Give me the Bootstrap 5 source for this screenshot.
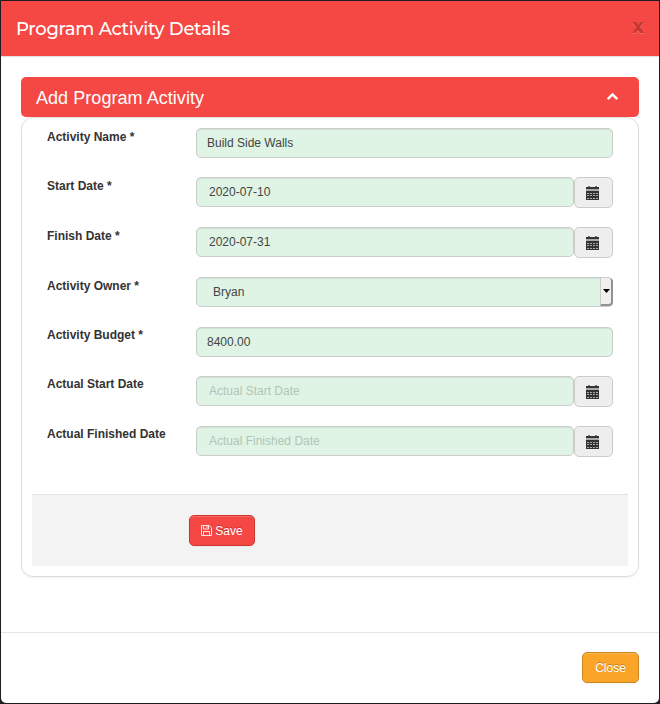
<!DOCTYPE html>
<html lang="en">
<head>
<meta charset="utf-8">
<meta name="viewport" content="width=device-width, initial-scale=1">
<title>Program Activity Details</title>
<link href="https://cdn.jsdelivr.net/npm/bootstrap@5.3.0/dist/css/bootstrap.min.css" rel="stylesheet">
<style>
body{background:#1e1c20;font:12px/20px "Liberation Sans",Arial,sans-serif;color:#333;padding:1px;height:704px;overflow:hidden}
.dialog{height:702px;border:0;border-radius:0 0 5px 5px;background:#fff}
.dialog-head{height:56px;background:#f54743;border-bottom:1px solid #e0e0e0;border-radius:0;padding:0 15px 0 15px}
.dialog-title{font:500 18px/20px Montserrat,Inter,sans-serif;color:#fff;letter-spacing:-.28px}
.dismiss{font:bold 20px/20px Montserrat,Inter,sans-serif;color:#000;opacity:.2;text-shadow:0 1px 0 #fff;margin-top:-6px}
.dialog-main{padding:20px 20px 0}
.panel-head{height:40px;border-radius:5px;background:#f54743;color:#fff;font-size:18px;line-height:20px;letter-spacing:.05px;padding:1px 20px 0 15px}
.panel-head svg{margin-top:-3px}
.panel-main{height:460px;border:1px solid #ddd;border-radius:12px;padding:10px 10px 0;box-shadow:0 1px 2px rgba(0,0,0,.06)}
.fields{display:grid;grid-template-rows:49px 50px 50px 50px 49px 50px 68px;padding:0 15px}
.field{display:grid;grid-template-columns:149px 417px}
.field label{font-weight:700;line-height:18px}
.field.up label{margin-top:-1px}
.field .form-control,.field .form-select{height:30px;min-height:0;font-size:12px;line-height:18px;padding:4px 10px;border:1px solid #ccc;border-radius:5px;background:#dff4e4;color:#444;box-shadow:inset 0 1px 1px rgba(0,0,0,.075)}
.field .input-group .form-control{padding-left:12px}
.field .form-control::placeholder{color:#b3c4b7;opacity:1}
.input-group .input-group-text{width:39px;height:31px;border:1px solid #ccc;border-radius:5px!important;background:#eee;padding:0 3px 0 0;margin-left:0!important}
.input-group .form-control{border-radius:5px!important}
.field .form-select{padding-left:16px}
.arrow-cap{position:absolute;right:0;top:1px;width:13px;height:28px;background:#f0f0ee;border-left:1px solid #ccc;border-right:2px solid #929292;border-bottom:2px solid #929292;border-radius:0 4px 4px 0;pointer-events:none}
.action-bar{height:72px;background:#f3f3f3;border-top:1px solid #e2e2e2;padding:20px 0 0 157px}
.btn.action{height:31px;padding:0;border-radius:5px;font-size:12px;line-height:18px;color:#fff;text-shadow:0 -1px 0 rgba(0,0,0,.25);box-shadow:inset 0 1px 0 rgba(255,255,255,.2),0 1px 2px rgba(0,0,0,.05)}
.save{width:66px;background:#f54743;border-color:#cd3533}
.save svg{margin-right:3px}
.close-btn{width:57px;background:#faa528;border-color:#cb841f}
.dialog-foot{height:71px;border-top:1px solid #e5e5e5;padding:19px 20px 0}
svg{display:block;flex:none}
</style>
<script src="https://cdn.jsdelivr.net/npm/bootstrap@5.3.0/dist/js/bootstrap.bundle.min.js"></script>
</head>
<body>
<svg width="0" height="0" class="position-absolute"><defs><symbol id="cal" viewBox="0 0 13 14"><path fill="#777" d="M2 0h2v1H2zM9 0h2v1H9z"/><path fill="#333" d="M0 1h13v13H0z"/><path fill="#aaa" d="M0 3h13v2H0z"/><path stroke="#aaa" stroke-width="1" stroke-dasharray="2 1" d="M1 7.5h11M1 9.5h11M1 12.5h11"/></symbol></defs></svg>
<div class="dialog d-flex flex-column">
  <header class="dialog-head d-flex align-items-center justify-content-between">
    <h1 class="dialog-title m-0">Program Activity Details</h1>
    <button class="dismiss border-0 bg-transparent p-0" aria-label="Close">x</button>
  </header>
  <main class="dialog-main flex-grow-1">
    <div class="panel-head d-flex align-items-center justify-content-between">
      <span>Add Program Activity</span>
      <svg width="13" height="9" viewBox="0 0 13 9" fill="none" stroke="#fff" stroke-width="2.5"><path d="M1.7 7.2 6.5 2.4l4.8 4.8"/></svg>
    </div>
    <form class="panel-main">
      <div class="fields">
        <div class="field"><label for="name">Activity Name *</label><input id="name" class="form-control" value="Build Side Walls"></div>
        <div class="field"><label for="start">Start Date *</label><div class="input-group align-items-start flex-nowrap"><input id="start" class="form-control" value="2020-07-10"><span class="input-group-text justify-content-center"><svg width="13" height="14"><use href="#cal"/></svg></span></div></div>
        <div class="field"><label for="finish">Finish Date *</label><div class="input-group align-items-start flex-nowrap"><input id="finish" class="form-control" value="2020-07-31"><span class="input-group-text justify-content-center"><svg width="13" height="14"><use href="#cal"/></svg></span></div></div>
        <div class="field"><label for="owner">Activity Owner *</label><div class="position-relative"><select id="owner" class="form-select"><option>Bryan</option></select><span class="arrow-cap d-flex align-items-center justify-content-center"><svg width="7" height="4" viewBox="0 0 7 4"><path d="M0 0h7L3.5 4z"/></svg></span></div></div>
        <div class="field up"><label for="budget">Activity Budget *</label><input id="budget" class="form-control" value="8400.00"></div>
        <div class="field up"><label for="astart">Actual Start Date</label><div class="input-group align-items-start flex-nowrap"><input id="astart" class="form-control" placeholder="Actual Start Date"><span class="input-group-text justify-content-center"><svg width="13" height="14"><use href="#cal"/></svg></span></div></div>
        <div class="field up"><label for="afinish">Actual Finished Date</label><div class="input-group align-items-start flex-nowrap"><input id="afinish" class="form-control" placeholder="Actual Finished Date"><span class="input-group-text justify-content-center"><svg width="13" height="14"><use href="#cal"/></svg></span></div></div>
      </div>
      <div class="action-bar">
        <button type="button" class="btn action save d-flex align-items-center justify-content-center"><svg width="11" height="11" viewBox="0 0 11 11" fill="none" stroke="#fff" stroke-opacity=".85"><path d="M.5.5h7.7l2.3 2.3v7.7H.5zM2.5.5v3.5h5V.5M2.5 10.5v-4h6v4M6 1v2"/></svg>Save</button>
      </div>
    </form>
  </main>
  <footer class="dialog-foot d-flex justify-content-end align-items-start">
    <button type="button" class="btn action close-btn">Close</button>
  </footer>
</div>
</body>
</html>
